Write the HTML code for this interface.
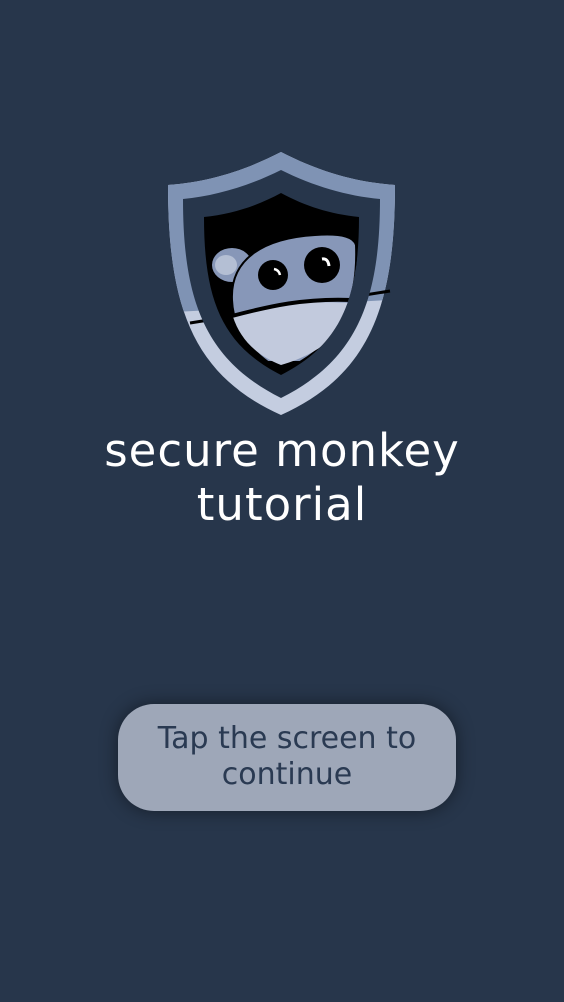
<!DOCTYPE html>
<html><head><style>
html,body{margin:0;padding:0;}
body{width:564px;height:1002px;background:#27364b;position:relative;overflow:hidden;font-family:"DejaVu Sans","Liberation Sans",sans-serif;}
.t{position:absolute;left:0;width:564px;text-align:center;color:#fff;font-size:45px;letter-spacing:1px;line-height:54px;top:424px;}
.b{position:absolute;left:118px;top:704px;width:338px;height:107px;border-radius:36px;background:#9ea7b8;box-shadow:0 0 18px rgba(0,0,0,.45);color:#2a3a52;font-size:30px;line-height:36px;text-align:center;box-sizing:border-box;padding-top:17px;}
</style></head><body>
<svg width="564" height="1002" style="position:absolute;left:0;top:0">
<defs>
<clipPath id="up"><polygon points="0,0 564,0 564,290 0,322"/></clipPath>
<clipPath id="in"><path d="M281,193 C305,206 330,214 359,217 C359,300 340,345 281,375 C222,345 204,300 204,217 C232,214 257,206 281,193 Z"/></clipPath>
</defs>
<path id="o" d="M281,152 C320,172 355,182 395,185 C395,305 370,375 281,415 C192,375 168,305 168,185 C207,182 242,172 281,152 Z" fill="#c4cde0"/>
<path clip-path="url(#up)" d="M281,152 C320,172 355,182 395,185 C395,305 370,375 281,415 C192,375 168,305 168,185 C207,182 242,172 281,152 Z" fill="#7f93b4"/>
<line x1="190" y1="323" x2="390" y2="291" stroke="#000" stroke-width="3"/>
<path d="M281,170 C313,186 347,196 380,199 C380,300 357,360 281,398 C205,360 183,300 183,199 C215,196 249,186 281,170 Z" fill="#27364b"/>
<path d="M281,193 C305,206 330,214 359,217 C359,300 340,345 281,375 C222,345 204,300 204,217 C232,214 257,206 281,193 Z" fill="#000"/>
<g clip-path="url(#in)">
<ellipse cx="232" cy="265" rx="20" ry="17" fill="#8797b8"/>
<ellipse cx="226" cy="265" rx="11" ry="10" fill="#b4bfd4"/>
<path d="M232,300 C230,258 265,238 315,235 C345,233 354,238 356,245 C358,295 345,335 300,362 L268,362 C245,345 233,325 232,300 Z" fill="#8797b8" stroke="#000" stroke-width="2"/>
<path d="M233,317 C270,306 305,300 350,303 C345,330 325,352 281,365 C255,355 240,338 233,317 Z" fill="#c2cadd"/>
<path d="M232,316 C270,306 305,298 352,300" stroke="#000" stroke-width="4" fill="none"/>
</g>
<circle cx="273" cy="275" r="15" fill="#000"/>
<path d="M274,269 q5,1 6,6" stroke="#fff" stroke-width="2.5" fill="none"/>
<circle cx="322" cy="265" r="18" fill="#000"/>
<path d="M322,259 q6,-1 7,7" stroke="#fff" stroke-width="3" fill="none"/>
</svg>
<div class="t">secure monkey<br>tutorial</div>
<div class="b">Tap the screen to<br>continue</div>
</body></html>
